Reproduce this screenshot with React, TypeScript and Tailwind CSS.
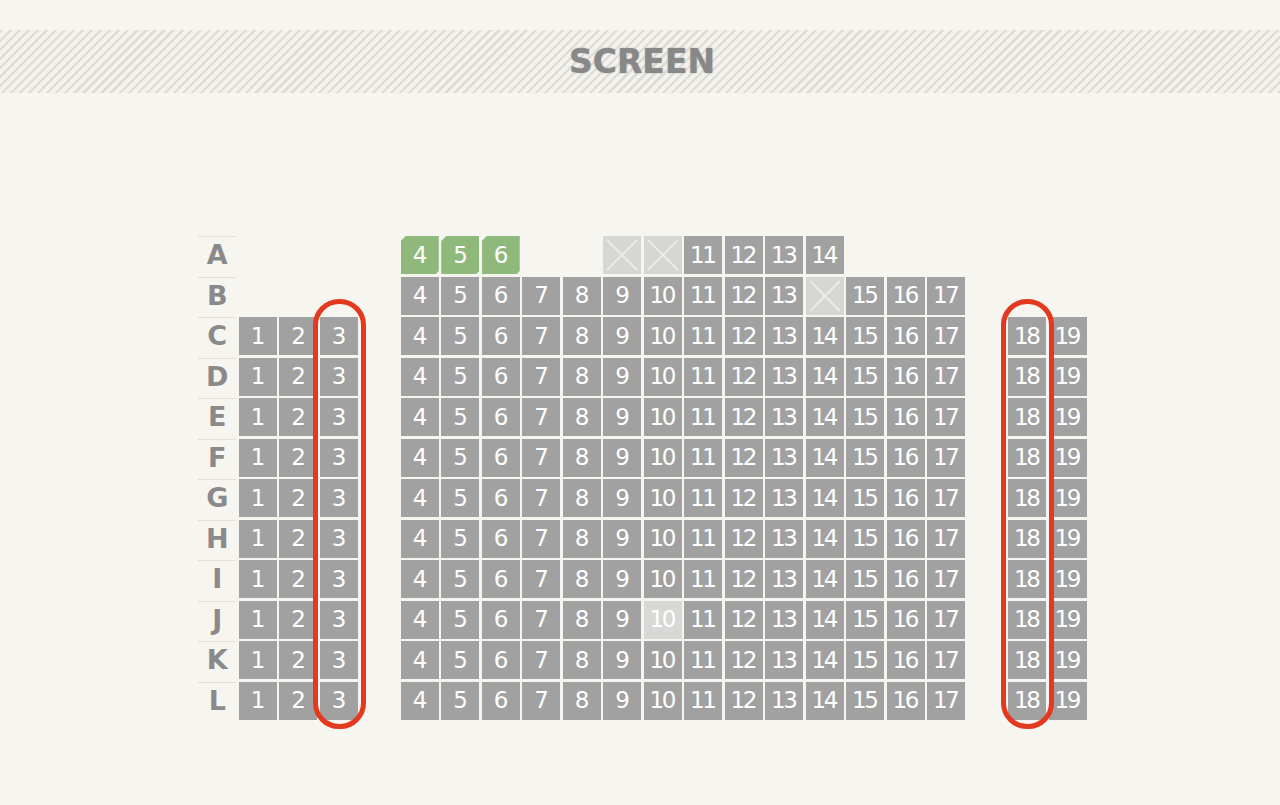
const ROWS = ['A', 'B', 'C', 'D', 'E', 'F', 'G', 'H', 'I', 'J', 'K', 'L'];

type SeatKind = 'open' | 'picked' | 'blocked' | 'taken' | 'none';

// slot index -> seat number (aisles at slot 3 and 18)
function seatNumber(slot: number) {
  if (slot < 3) return slot + 1;
  if (slot >= 4 && slot <= 17) return slot;
  if (slot === 19) return 18;
  if (slot === 20) return 19;
  return 0;
}

function seatKind(row: string, num: number): SeatKind {
  if (num === 0) return 'none';
  if (row === 'A') {
    if (num >= 4 && num <= 6) return 'picked';
    if (num === 9 || num === 10) return 'blocked';
    if (num >= 11 && num <= 14) return 'open';
    return 'none';
  }
  if (row === 'B') {
    if (num < 4 || num > 17) return 'none';
    if (num === 14) return 'blocked';
    return 'open';
  }
  if (row === 'J' && num === 10) return 'taken';
  return 'open';
}

function Seat({ kind, num }: { kind: SeatKind; num: number }) {
  if (kind === 'none') return <div className="w-[38px] h-[38px]" />;

  if (kind === 'blocked') {
    return (
      <div className="w-[38px] h-[38px] bg-[#d6d6d4]">
        <svg width="38" height="38" viewBox="0 0 38 38">
          <path d="M4 4L34 34M34 4L4 34" stroke="#ececea" strokeWidth="1.8" />
        </svg>
      </div>
    );
  }

  const bg =
    kind === 'picked'
      ? 'bg-[#8fb87b] [clip-path:polygon(5px_0,100%_0,100%_calc(100%-3px),calc(100%-3px)_100%,0_100%,0_5px)]'
      : kind === 'taken'
        ? 'bg-[#d8d8d6]'
        : 'bg-[#a1a1a1]';

  return (
    <div
      className={`w-[38px] h-[38px] flex items-center justify-center text-white text-[23px] tracking-[-2.5px] pr-[2px] ${bg}`}
      style={{ fontFamily: '"DejaVu Sans", sans-serif' }}
    >
      {num}
    </div>
  );
}

export default function App() {
  return (
    <div className="min-h-[805px] bg-[#f6f5f0] pt-[30px]">
      {/* Screen */}
      <div className="h-[63px] flex items-center justify-center bg-[repeating-linear-gradient(135deg,#dedcd7_0px,#dedcd7_2.3px,#f3f2ed_2.3px,#f3f2ed_6.4px)]">
        <span
          className="text-[33px] font-bold text-[#888888] ml-[4px] [text-shadow:0_0_1.5px_#999999]"
          style={{ fontFamily: '"DejaVu Sans", Verdana, sans-serif' }}
        >
          SCREEN
        </span>
      </div>

      {/* Seat map */}
      <div className="flex justify-center pl-[5px] pt-[143px]">
        <div className="relative">
          <div className="grid grid-cols-[38px_repeat(21,38px)] gap-[2.5px]">
            {ROWS.map((row) => (
              <div key={row} className="contents">
                <div
                  className="w-[38px] h-[38px] border-t-[1.5px] border-[#e0dfda] flex items-center justify-center text-[27px] font-bold text-[#8a8a8a]"
                  style={{ fontFamily: '"DejaVu Sans", Verdana, sans-serif' }}
                >
                  {row}
                </div>
                {Array.from({ length: 21 }).map((_, slot) => {
                  const num = seatNumber(slot);
                  return <Seat key={slot} kind={seatKind(row, num)} num={num} />;
                })}
              </div>
            ))}
          </div>

          {/* highlight outlines */}
          <div className="absolute left-[115px] top-[63px] w-[53px] h-[430px] border-[5px] border-[#e3391e] rounded-[26px]" />
          <div className="absolute left-[803px] top-[63px] w-[53px] h-[430px] border-[5px] border-[#e3391e] rounded-[26px]" />
        </div>
      </div>
    </div>
  );
}
